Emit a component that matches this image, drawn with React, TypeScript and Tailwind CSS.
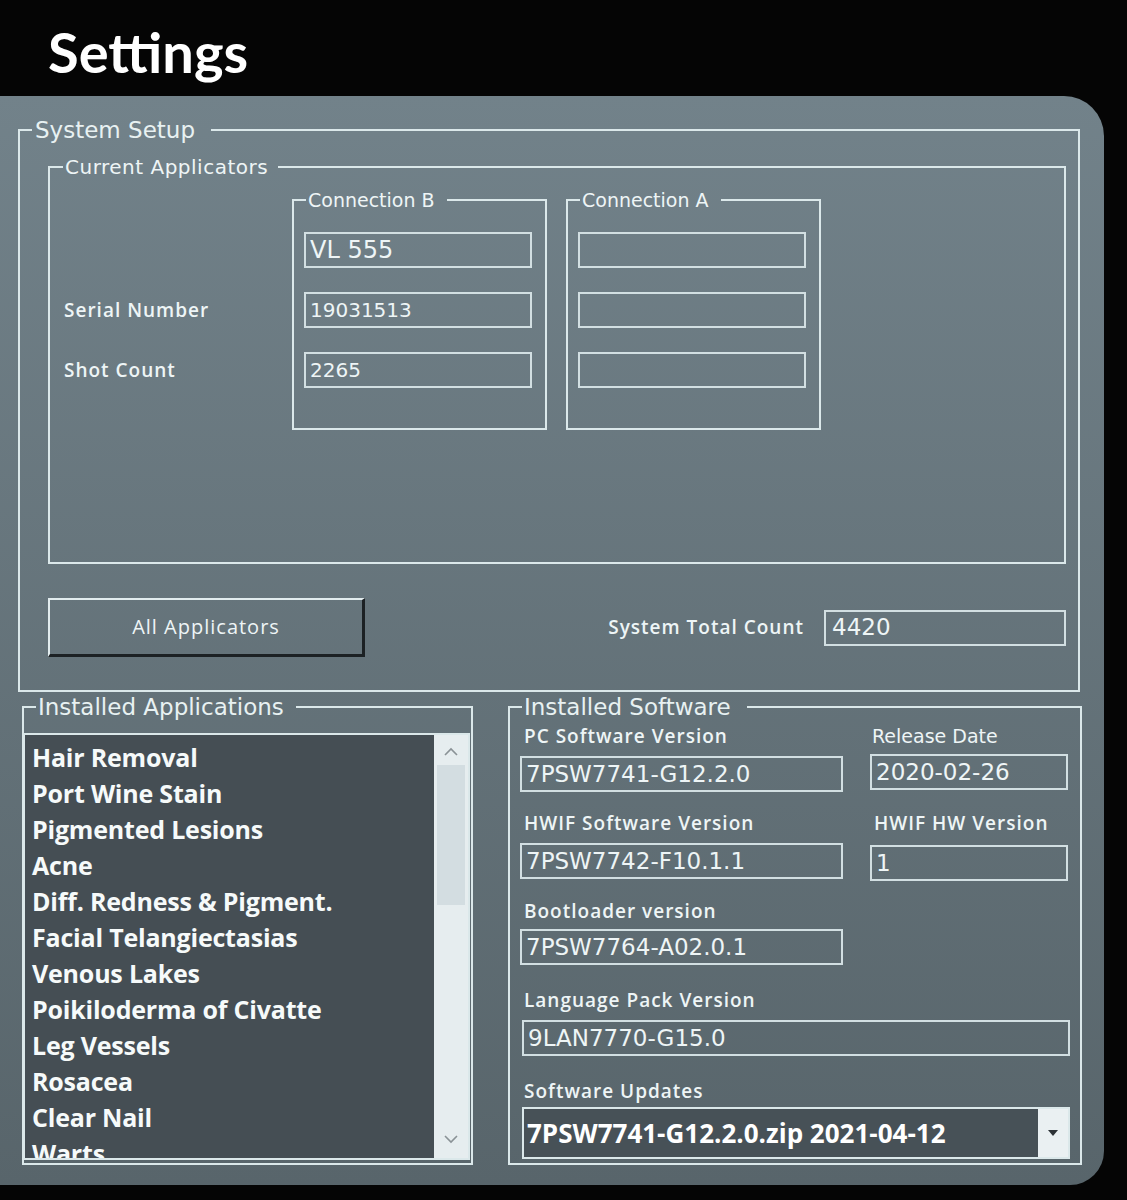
import React from "react";

const thin = "font-['DejaVu_Sans',sans-serif]";
const bold = "font-['Open_Sans',sans-serif]";

function Field({ w, text, size, extra }: { w: string; text?: string; size?: string; extra?: string }) {
  return (
    <div
      className={`${w} h-[36px] border-2 border-[#d2dfe2] flex items-center pl-[4px] ${thin} ${size ?? "text-[23px]"} text-[#eef5f6] leading-none ${extra ?? ""}`}
    >
      {text}
    </div>
  );
}

function Label({ children, light }: { children: React.ReactNode; light?: boolean }) {
  return (
    <div
      className={`h-[24px] leading-[24px] text-[#eef5f6] whitespace-nowrap ${
        light ? `${thin} text-[19px] pl-[2px]` : `${bold} font-semibold text-[19px] tracking-[1px] pl-[4px]`
      }`}
    >
      {children}
    </div>
  );
}

function ConnBox({ label, values }: { label: string; values: { t: string; s: string }[] }) {
  return (
    <fieldset className="mt-[9px] w-[255px] h-[242px] border-2 border-[#dbe8ea]">
      <legend className={`ml-[12px] pl-[2px] pr-[12px] ${thin} text-[19px] leading-[24px] text-[#eef5f6]`}>{label}</legend>
      <div className="ml-[10px] mt-[20px] flex flex-col gap-[24px]">
        {values.map((v, i) => (
          <Field key={i} w="w-[228px]" text={v.t} size={v.s} />
        ))}
      </div>
    </fieldset>
  );
}

const apps = [
  "Hair Removal",
  "Port Wine Stain",
  "Pigmented Lesions",
  "Acne",
  "Diff. Redness & Pigment.",
  "Facial Telangiectasias",
  "Venous Lakes",
  "Poikiloderma of Civatte",
  "Leg Vessels",
  "Rosacea",
  "Clear Nail",
  "Warts",
];

export default function App() {
  return (
    <div className="w-[1127px] h-[1200px] bg-[#050505] overflow-hidden">
      <div className="h-[96px] pl-[48px] pt-[22px]">
        <h1 className="font-['Lato',sans-serif] font-bold text-[56px] leading-[60px] text-white">Settings</h1>
      </div>
      <div className="w-[1104px] h-[1089px] rounded-tr-[40px] rounded-br-[34px] bg-gradient-to-b from-[#72828a] to-[#58656b] pt-[20px] pl-[18px]">
        {/* System Setup */}
        <fieldset className="w-[1062px] h-[576px] border-2 border-[#dbe8ea]">
          <legend className={`ml-[12px] pl-[3px] pr-[16px] ${thin} text-[23px] leading-[28px] text-[#e8f1f2]`}>System Setup</legend>
          <fieldset className="ml-[28px] mt-[11px] w-[1018px] h-[409px] border-2 border-[#dbe8ea]">
            <legend className={`ml-[13px] pl-[2px] pr-[10px] ${thin} text-[20px] leading-[24px] tracking-[0.5px] text-[#eef5f6]`}>Current Applicators</legend>
            <div className="flex">
              <div className="w-[242px] pl-[14px] pt-[113px] flex flex-col gap-[24px]">
                <div className={`h-[36px] flex items-center ${bold} font-semibold text-[19px] tracking-[1px] text-[#eef5f6]`}>Serial Number</div>
                <div className={`h-[36px] flex items-center ${bold} font-semibold text-[19px] tracking-[1px] text-[#eef5f6]`}>Shot Count</div>
              </div>
              <ConnBox
                label="Connection B"
                values={[
                  { t: "VL 555", s: "text-[24px]" },
                  { t: "19031513", s: "text-[20px]" },
                  { t: "2265", s: "text-[20px]" },
                ]}
              />
              <div className="w-[19px]" />
              <ConnBox
                label="Connection A"
                values={[
                  { t: "", s: "text-[20px]" },
                  { t: "", s: "text-[20px]" },
                  { t: "", s: "text-[20px]" },
                ]}
              />
            </div>
          </fieldset>
          <div className="ml-[28px] mt-[34px] w-[1018px] flex items-center">
            <button
              className={`w-[317px] h-[59px] border-t-2 border-l-2 border-b-[3px] border-r-[3px] border-t-[#e2ecee] border-l-[#e2ecee] border-b-[#1c2124] border-r-[#1c2124] ${bold} font-medium text-[20px] tracking-[1px] text-[#eef5f6]`}
            >
              All Applicators
            </button>
            <div className="flex-1 flex items-center justify-end gap-[20px]">
              <span className={`${bold} font-semibold text-[19px] tracking-[1px] text-[#eef5f6]`}>System Total Count</span>
              <Field w="w-[242px]" text="4420" size="text-[23px]" extra="pl-[6px]" />
            </div>
          </div>
        </fieldset>

        {/* Bottom */}
        <div className="flex mt-[1px]">
          <fieldset className="ml-[4px] w-[451px] h-[472px] border-2 border-[#dbe8ea]">
            <legend className={`ml-[12px] pl-[2px] pr-[12px] ${thin} text-[23px] leading-[28px] text-[#e8f1f2]`}>Installed Applications</legend>
            <div className="mt-[12px] ml-[-1px] w-[447px] h-[427px] border-2 border-[#dbe8ea] bg-[#454e54] flex overflow-hidden">
              <div className="flex-1 pl-[7px] pt-[4px] overflow-hidden">
                {apps.map((a) => (
                  <div key={a} className={`${bold} font-bold text-[25px] leading-[36px] tracking-[-0.2px] text-[#f6fafa] whitespace-nowrap`}>
                    {a}
                  </div>
                ))}
              </div>
              <div className="w-[34px] h-full bg-[#e6edef] flex flex-col items-center">
                <svg width="16" height="10" viewBox="0 0 16 10" className="mt-[12px]">
                  <polyline points="2,8 8,2 14,8" fill="none" stroke="#8a9296" strokeWidth="1.6" />
                </svg>
                <div className="mt-[8px] w-[28px] h-[140px] bg-[#d3dde1]" />
                <div className="flex-1" />
                <svg width="16" height="10" viewBox="0 0 16 10" className="mb-[14px]">
                  <polyline points="2,2 8,8 14,2" fill="none" stroke="#8a9296" strokeWidth="1.6" />
                </svg>
              </div>
            </div>
          </fieldset>

          <fieldset className="ml-[35px] w-[574px] h-[472px] border-2 border-[#dbe8ea]">
            <legend className={`ml-[12px] pl-[2px] pr-[16px] ${thin} text-[23px] leading-[28px] text-[#e8f1f2]`}>Installed Software</legend>
            <div className="pl-[10px] pt-[3px]">
              <div className="flex gap-[27px]">
                <div className="w-[323px]">
                  <Label>PC Software Version</Label>
                  <Field w="w-[323px] mt-[8px]" text="7PSW7741-G12.2.0" />
                </div>
                <div className="w-[198px]">
                  <Label light>Release Date</Label>
                  <Field w="w-[198px] mt-[6px]" text="2020-02-26" />
                </div>
              </div>
              <div className="flex gap-[27px] mt-[19px]">
                <div className="w-[323px]">
                  <Label>HWIF Software Version</Label>
                  <Field w="w-[323px] mt-[8px]" text="7PSW7742-F10.1.1" />
                </div>
                <div className="w-[198px]">
                  <Label>HWIF HW Version</Label>
                  <Field w="w-[198px] mt-[10px]" text="1" />
                </div>
              </div>
              <div className="mt-[18px] w-[323px]">
                <Label>Bootloader version</Label>
                <Field w="w-[323px] mt-[6px]" text="7PSW7764-A02.0.1" />
              </div>
              <div className="mt-[23px]">
                <Label>Language Pack Version</Label>
                <Field w="w-[548px] ml-[2px] mt-[8px]" text="9LAN7770-G15.0" />
              </div>
              <div className="mt-[23px]">
                <Label>Software Updates</Label>
                <div className="ml-[2px] mt-[4px] w-[548px] h-[52px] border-2 border-[#dbe8ea] bg-[#475157] flex items-stretch">
                  <div className={`flex-1 flex items-center pl-[3px] ${bold} font-bold text-[26px] text-white whitespace-nowrap`}>
                    7PSW7741-G12.2.0.zip 2021-04-12
                  </div>
                  <div className="w-[30px] bg-[#eaf0f2] flex items-center justify-center">
                    <svg width="10" height="6" viewBox="0 0 10 6">
                      <polygon points="0,0 10,0 5,6" fill="#2c3236" />
                    </svg>
                  </div>
                </div>
              </div>
            </div>
          </fieldset>
        </div>
      </div>
    </div>
  );
}
